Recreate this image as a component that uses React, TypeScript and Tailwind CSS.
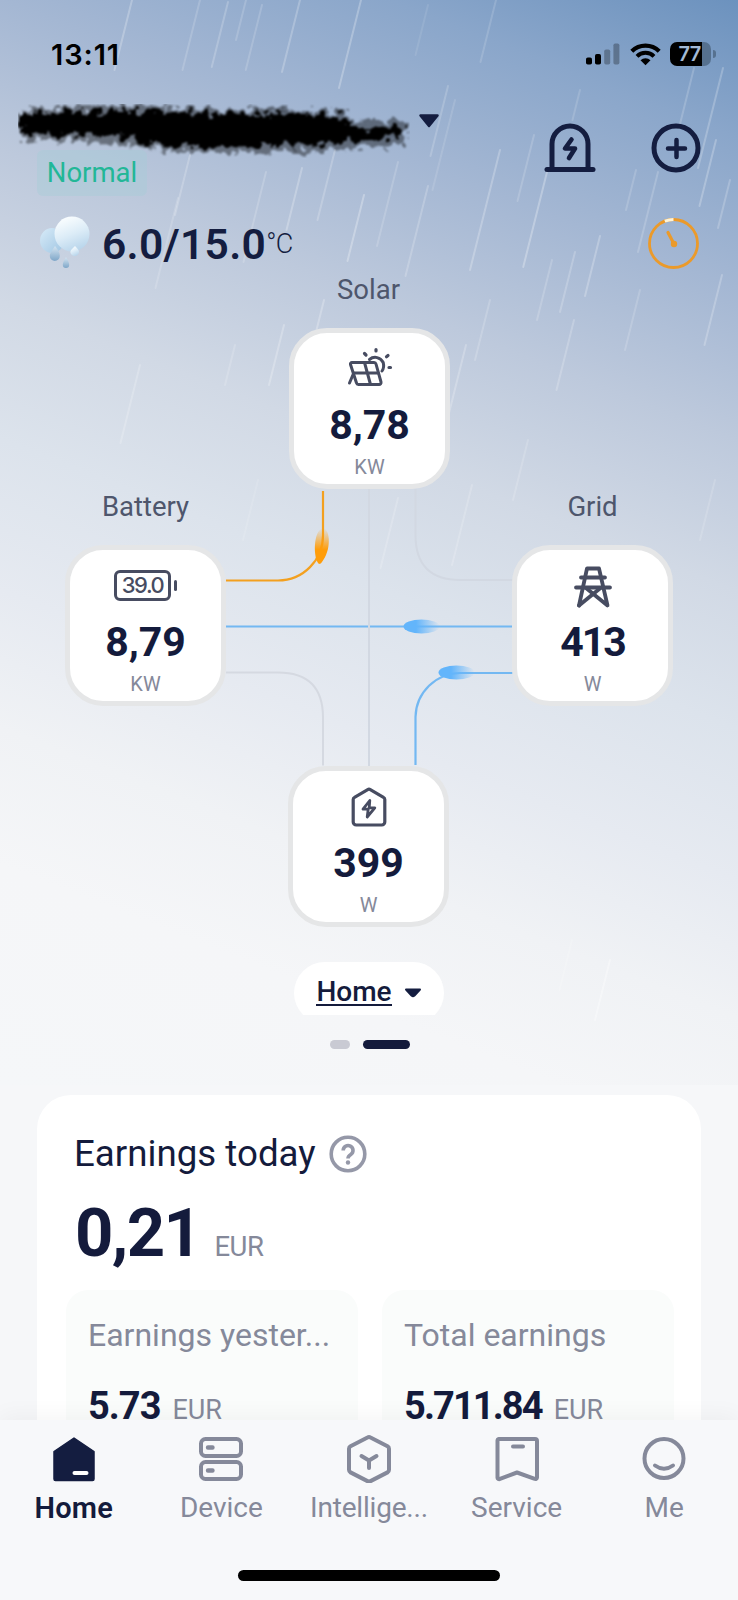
import type { ReactNode } from "react";

const RAIN: [number, number, number, number][] = [
  [132, 0, 70, 0.3], [200, 0, 70, 0.2], [228, 2, 65, 0.25], [246, 0, 40, 0.2], [262, 5, 65, 0.2], [300, 0, 72, 0.28],
  [361, 0, 88, 0.32], [496, 0, 62, 0.18], [428, 5, 50, 0.12], [448, 86, 70, 0.22],
  [190, 155, 60, 0.25], [178, 198, 90, 0.2], [302, 168, 62, 0.3], [335, 150, 70, 0.25], [364, 195, 66, 0.35],
  [398, 162, 84, 0.2], [428, 186, 90, 0.25], [455, 100, 90, 0.15], [500, 150, 120, 0.3], [534, 135, 66, 0.2],
  [547, 172, 95, 0.35], [600, 236, 60, 0.3], [575, 252, 60, 0.25], [580, 90, 30, 0.18], [636, 170, 40, 0.2],
  [658, 172, 80, 0.22], [694, 68, 60, 0.22], [723, 68, 100, 0.28], [716, 140, 66, 0.3], [730, 180, 48, 0.25],
  [722, 275, 70, 0.28], [266, 172, 90, 0.22], [324, 300, 50, 0.3], [284, 325, 60, 0.3],
  [466, 345, 70, 0.28], [490, 300, 60, 0.22], [552, 260, 60, 0.22], [574, 320, 70, 0.25],
  [640, 290, 60, 0.2], [140, 365, 78, 0.25], [235, 345, 40, 0.2],
  [398, 498, 70, 0.22], [472, 485, 80, 0.22], [528, 440, 60, 0.2], [715, 480, 60, 0.18], [258, 480, 60, 0.15],
  [610, 960, 60, 0.4], [572, 940, 50, 0.2],
];

function Rain() {
  return (
    <svg className="absolute inset-0" width="738" height="1085" viewBox="0 0 738 1085" fill="none">
      {RAIN.map(([x, y, len, o], i) => (
        <line key={i} x1={x} y1={y} x2={x - len * 0.25} y2={y + len} stroke="#fff" strokeOpacity={o * 0.8} strokeWidth="2" strokeLinecap="round" />
      ))}
    </svg>
  );
}

function StatusBar() {
  return (
    <div className="flex h-[104px] items-center justify-between pt-1 pr-[22px] pl-[51px]">
      <span className="font-[Inter,sans-serif] text-[29px] leading-none font-semibold tracking-[0.9px] text-black">13:11</span>
      <div className="flex items-center">
        <svg width="34" height="22" viewBox="0 0 34 22">
          <rect x="0" y="14.5" width="6" height="7" rx="1.8" />
          <rect x="9" y="11" width="6" height="10.500" rx="1.8" />
          <rect x="18.200" y="6.500" width="6" height="15" rx="1.8" fillOpacity="0.28" />
          <rect x="27.400" y="0.500" width="6" height="21" rx="1.8" fillOpacity="0.28" />
        </svg>
        <svg className="ml-2.5" width="31" height="24" viewBox="0 0 31 24" fill="none" stroke="#000" strokeWidth="4.200">
          <path d="M1.800 9.200a19.500 19.500 0 0 1 27.400 0" />
          <path d="M7 14.400a12 12 0 0 1 17 0" strokeWidth="4" />
          <path d="M10.500 18.300a7.200 7.200 0 0 1 10 0l-5 5z" fill="#000" stroke="none" />
        </svg>
        <div className="ml-[9px] flex h-6 w-[41px] items-center justify-center rounded-[7px] bg-[linear-gradient(90deg,#000_78%,#56718f_78%)]">
          <span className="-ml-0.5 font-[Inter,sans-serif] text-[20px] leading-none font-semibold tracking-[-0.8px] text-[#a3bad6]">77</span>
        </div>
        <div className="ml-0.5 h-2 w-[3px] rounded-r-full bg-[#56718f]" />
      </div>
    </div>
  );
}

function RedactedAccount() {
  return (
    <svg width="392" height="54" viewBox="0 0 392 54" fill="none" className="block">
      <defs>
        <filter id="rough" x="-5%" y="-30%" width="110%" height="160%">
          <feTurbulence type="fractalNoise" baseFrequency="0.11" numOctaves="3" seed="7" result="n" />
          <feDisplacementMap in="SourceGraphic" in2="n" scale="20" xChannelSelector="R" yChannelSelector="G" />
          <feGaussianBlur stdDeviation="1.3" />
        </filter>
      </defs>
      <g filter="url(#rough)">
        <path d="M2 7 40 4 100 2 200 5 300 6 326 8 334 17 372 15 389 18 388 40 350 43 310 47 270 48 200 49 150 47 120 41 60 37 6 35Z" fill="#000" fillOpacity="0.42" />
        <path d="M2 10 60 8 120 7 200 9 300 10 326 12 334 22 386 23 384 34 330 38 300 41 240 42 190 43 140 41 110 34 50 31 4 30Z" fill="#000" />
      </g>
    </svg>
  );
}

function AlarmIcon() {
  return (
    <svg width="52" height="50" viewBox="0 0 52 50" fill="none" stroke="#141d40" strokeWidth="5" strokeLinecap="round" strokeLinejoin="round">
      <path d="M8 45V21a18 18 0 0 1 36 0v24" />
      <path d="M3 46.500h46" />
      <path d="M27.500 16.500 21 25.500h10l-6 9.500" strokeWidth="4.600" />
    </svg>
  );
}

function PlusCircle() {
  return (
    <svg width="50" height="50" viewBox="0 0 50 50" fill="none" stroke="#141d40" strokeWidth="5" strokeLinecap="round">
      <circle cx="25" cy="25" r="22" />
      <path d="M25.500 17v17M17 25.500h17" strokeWidth="4.500" />
    </svg>
  );
}

function WeatherIcon() {
  return (
    <svg width="52" height="54" viewBox="0 0 52 54">
      <defs>
        <linearGradient id="cloudFront" x1="0.3" y1="0" x2="0.7" y2="1">
          <stop offset="0" stopColor="#fbfeff" />
          <stop offset="0.5" stopColor="#dcecf7" />
          <stop offset="1" stopColor="#b5d3ea" />
        </linearGradient>
        <linearGradient id="cloudBack" x1="0" y1="0" x2="1" y2="1">
          <stop offset="0" stopColor="#d8ebf8" />
          <stop offset="1" stopColor="#9fc5e2" />
        </linearGradient>
        <linearGradient id="drop" x1="0" y1="0" x2="0" y2="1">
          <stop offset="0" stopColor="#d5e5f1" />
          <stop offset="1" stopColor="#7ea6c8" />
        </linearGradient>
      </defs>
      <ellipse cx="13" cy="24.500" rx="12" ry="12.500" fill="url(#cloudBack)" />
      <circle cx="33" cy="18" r="17.500" fill="url(#cloudFront)" />
      <path d="M16 30c4 5 4.800 7.500 4.800 10a5 5 0 0 1-10 0c0-2.500 2-5 5.200-10Z" fill="url(#drop)" />
      <path d="M36 30c3 3 4 4.500 4 6a4.300 4 0 0 1-8.600 0c0-1.500 1.600-3 4.600-6Z" fill="url(#cloudFront)" />
      <path d="M27 41c2.300 4 3.200 6 3.200 7.800a3.200 3.200 0 0 1-6.400 0c0-1.800.9-3.800 3.200-7.800Z" fill="url(#drop)" />
    </svg>
  );
}

function GaugeIcon() {
  return (
    <svg width="52" height="52" viewBox="0 0 52 52" fill="none" strokeLinecap="round">
      <circle cx="25.500" cy="26.500" r="24" stroke="#eb9a2a" strokeWidth="2.800" />
      <path d="M16.800 4.200a24 24 0 0 1 8.700-1.700" stroke="#fdf3d8" strokeWidth="3" strokeLinecap="butt" />
      <path d="M20 15.500 25.500 26" stroke="#eb9a2a" strokeWidth="3.200" />
      <circle cx="26" cy="27" r="3.200" fill="#eb9a2a" />
    </svg>
  );
}

function SolarIcon() {
  return (
    <svg width="46" height="42" viewBox="0 0 46 42" fill="none" stroke="#474c61" strokeWidth="3" strokeLinecap="round" strokeLinejoin="round">
      <path d="M5 15.500h22a2 2 0 0 1 2 1.500l5 18a2 2 0 0 1-2 2.500H11.500a2 2 0 0 1-2-1.500L3.500 17.500A1.500 1.500 0 0 1 5 15.500Z" />
      <path d="M7 26h24M17.500 15.500l6 22M6.500 26.500 2.500 36" />
      <path d="M22.500 12.500A8.800 8.800 0 0 1 36.200 15.500Q37.500 20.500 35 24" />
      <path d="M29 2.500v1.500M17.500 6.500l1.500 1.500M41 8.500 39.500 9.700M42 20.500h1.500" strokeWidth="3.200" />
    </svg>
  );
}

function BatteryIcon() {
  return (
    <div className="flex items-center">
      <div className="flex h-[31px] w-[57px] items-center justify-center rounded-[6px] border-[3px] border-[#474c61] font-[Inter,sans-serif] text-[22px] leading-none font-medium tracking-[-1.4px] text-[#474c61]">
        39.0
      </div>
      <div className="ml-[3px] h-[11px] w-[3px] rounded-full bg-[#474c61]" />
    </div>
  );
}

function PylonIcon() {
  return (
    <svg width="40" height="42" viewBox="0 0 40 42" fill="none" stroke="#474c61" strokeWidth="3.800" strokeLinecap="round" strokeLinejoin="round" className="translate-y-0.5">
      <path d="M6 39.500 14 2.500h12l8.500 37L13 22" />
      <path d="M6 39.500 27.500 22" />
      <path d="M8 11.500h24M3 21.500h34" />
    </svg>
  );
}

function HouseIcon() {
  return (
    <svg width="36" height="40" viewBox="0 0 36 40" fill="none" stroke="#474c61" strokeWidth="3.200" strokeLinejoin="round" className="translate-y-px">
      <path d="M2.200 12.500a2.500 2.500 0 0 1 1.300-2.200L16.700 2.600a2.500 2.500 0 0 1 2.600 0l13.200 7.700a2.500 2.500 0 0 1 1.300 2.200V35a3 3 0 0 1-3 3H5.200a3 3 0 0 1-3-3Z" />
      <path d="M18.800 13.500 12 22.200h5.200l-1 7.800 7.600-9.200h-5.600Z" strokeWidth="2.800" />
    </svg>
  );
}

function Node({ place, icon, value, unit, tracking }: { place: string; icon: ReactNode; value: string; unit: string; tracking: string }) {
  return (
    <div className={`absolute flex h-[161px] w-[161px] flex-col items-center rounded-[38px] border-[5.5px] border-[#e5e6e7] bg-white ${place}`}>
      <div className="mt-3.5 flex h-[42px] items-center justify-center">{icon}</div>
      <div className={`mt-[14px] font-[Roboto,sans-serif] text-[41px] leading-[44px] font-bold text-[#141b3c] ${tracking}`}>{value}</div>
      <div className="mt-2 font-[Roboto,sans-serif] text-[20px] leading-6 text-[#85899a]">{unit}</div>
    </div>
  );
}

function NodeLabel({ place, children }: { place: string; children: ReactNode }) {
  return <div className={`absolute w-[161px] text-center font-[Roboto,sans-serif] text-[27.5px] leading-8 text-[#4e566c] ${place}`}>{children}</div>;
}

function EnergyFlow() {
  return (
    <div className="relative h-[684px]">
      <svg className="absolute inset-0" width="738" height="684" viewBox="0 278 738 684" fill="none" strokeWidth="2">
        <defs>
          <linearGradient id="orangeBlob" x1="0" y1="0" x2="0" y2="1">
            <stop offset="0" stopColor="#ff9d0a" stopOpacity="0" />
            <stop offset="0.6" stopColor="#ff9d0a" />
          </linearGradient>
          <linearGradient id="blueBlob" x1="1" y1="0" x2="0" y2="0">
            <stop offset="0" stopColor="#63b5fb" stopOpacity="0" />
            <stop offset="0.65" stopColor="#63b5fb" />
          </linearGradient>
        </defs>
        <path d="M415.500 489v46q0 45 45 45h52" stroke="#d2d8e2" />
        <path d="M226 672.500h52q45 0 45 45v48" stroke="#d5d9e1" />
        <path d="M323 491v44a45 45 0 0 1-45 45.500h-52" stroke="#f3a01f" strokeWidth="2.200" />
        <path d="M226 626.500h286M415.500 765v-48a45 45 0 0 1 45-44h52" stroke="#73b8f2" strokeWidth="2.200" />
        <path d="M369 489v277" stroke="#d2d8e2" />
        <path d="M319 564c-6-5-6-34 4-36 8 2 8 23-1 34q-1 2-3 2Z" fill="url(#orangeBlob)" />
        <ellipse cx="421.500" cy="626.500" rx="18" ry="7" fill="url(#blueBlob)" />
        <ellipse cx="456.500" cy="672.500" rx="18" ry="7" fill="url(#blueBlob)" />
      </svg>
      <NodeLabel place="left-[288px] top-[-4px]">Solar</NodeLabel>
      <NodeLabel place="left-[65px] top-[213px]">Battery</NodeLabel>
      <NodeLabel place="left-[512px] top-[213px]">Grid</NodeLabel>
      <Node place="left-[289px] top-[50px]" icon={<SolarIcon />} value="8,78" unit="KW" tracking="tracking-[0px]" />
      <Node place="left-[65px] top-[267px]" icon={<BatteryIcon />} value="8,79" unit="KW" tracking="tracking-[0px]" />
      <Node place="left-[512px] top-[267px]" icon={<PylonIcon />} value="413" unit="W" tracking="tracking-[-2px]" />
      <Node place="left-[288px] top-[488px]" icon={<HouseIcon />} value="399" unit="W" tracking="tracking-[0px]" />
    </div>
  );
}

function EarningsTile({ label, value, tracking }: { label: string; value: string; tracking: string }) {
  return (
    <div className="h-[180px] w-[292px] rounded-[22px] bg-[#fafcfb] px-[22px] pt-[26px] font-[Roboto,sans-serif]">
      <div className="text-[32px] leading-[38px] whitespace-nowrap text-[#85899a]">{label}</div>
      <div className="mt-[29px] flex items-baseline gap-3">
        <span className={`text-[38px] leading-[46px] font-bold text-[#141b3c] ${tracking}`}>{value}</span>
        <span className="text-[27px] text-[#85899a]">EUR</span>
      </div>
    </div>
  );
}

const NAV: { label: string; icon: ReactNode }[] = [
  {
    label: "Home",
    icon: (
      <>
        <path d="M24 3 4 16.500V44a1.500 1.500 0 0 0 1.500 1.500h37A1.500 1.500 0 0 0 44 44V16.500Z" fill="#141d40" stroke="#141d40" strokeWidth="1.500" strokeLinejoin="round" />
        <path d="M24.500 38h12" stroke="#fff" strokeWidth="4" strokeLinecap="round" />
      </>
    ),
  },
  {
    label: "Device",
    icon: (
      <>
        <rect x="4" y="4" width="40" height="17" rx="4.500" />
        <rect x="4" y="27" width="40" height="17" rx="4.500" />
        <path d="M11 12.500h4.500M11 35.500h4.500" strokeWidth="4.400" />
      </>
    ),
  },
  {
    label: "Intellige...",
    icon: (
      <>
        <path d="M22.500 2.500a3 3 0 0 1 3 0l17 8.700a3 3 0 0 1 1.500 2.600v21a3 3 0 0 1-1.500 2.600l-17 8.700a3 3 0 0 1-3 0l-17-8.700A3 3 0 0 1 4 34.800v-21a3 3 0 0 1 1.500-2.600Z" />
        <path d="m16.500 21 7.500 4.500 7.500-4.500M24 25.500V33" />
      </>
    ),
  },
  {
    label: "Service",
    icon: (
      <>
        <path d="M6 4h36a2 2 0 0 1 2 2v36.500a1.500 1.500 0 0 1-2.200 1.300L24 37.500 7 43.800a1.500 1.500 0 0 1-2.500-1.300V6A2 2 0 0 1 6 4Z" />
        <path d="M20 11.500h10" />
      </>
    ),
  },
  {
    label: "Me",
    icon: (
      <>
        <circle cx="24" cy="23.500" r="19.500" />
        <path d="M15 30.500q9 6.500 18 0" />
      </>
    ),
  },
];

function BottomNav() {
  return (
    <nav className="relative h-[180px] shrink-0 bg-[#f7f8fa] shadow-[0_-4px_22px_rgba(0,0,0,0.045)]">
      <div className="grid grid-cols-5 pt-[15px]">
        {NAV.map(({ label, icon }, i) => (
          <div key={label} className="flex flex-col items-center">
            <svg width="48" height="48" viewBox="0 0 48 48" fill="none" stroke="#85899a" strokeWidth="4" strokeLinecap="round" strokeLinejoin="round">
              {icon}
            </svg>
            <span className={`mt-[9px] font-[Roboto,sans-serif] leading-8 ${i === 0 ? "text-[29px] font-semibold tracking-[0.2px] text-[#141b3c]" : i === 2 ? "text-[28px] tracking-[-0.2px] text-[#85899a]" : "text-[28px] text-[#85899a]"}`}>{label}</span>
          </div>
        ))}
      </div>
      <div className="mx-auto mt-[46px] h-[11px] w-[262px] rounded-full bg-black" />
    </nav>
  );
}

export default function App() {
  return (
    <div className="relative flex h-[1600px] w-[738px] flex-col overflow-hidden bg-[#f6f7f9]">
      <div className="absolute inset-x-0 top-0 h-[1085px] bg-[linear-gradient(201.5deg,#6c92be_0%,#8aa6ca_10%,#a4b7d3_21%,#bdc9dc_32%,#d1d9e5_43%,#dce3ec_53%,#e6eaf1_64%,#f0f2f5_74%,#f5f6f8_84%,#f5f7f9_100%)]">
        <Rain />
      </div>
      <div className="relative min-h-0 flex-1 overflow-hidden">
        <StatusBar />
        <header className="flex h-[104px] justify-between pr-[37px]">
          <div className="pl-[18px]">
            <div className="flex h-[46px] items-start">
              <RedactedAccount />
              <svg className="mt-2.5 ml-2" width="22" height="14" viewBox="0 0 22 14">
                <path d="M2.500 1.500h17L11 12Z" fill="#141d40" stroke="#141d40" strokeWidth="2.500" strokeLinejoin="round" />
              </svg>
            </div>
            <div className="ml-[19px] flex h-[46px] w-[110px] items-center justify-center rounded-md bg-[#a5ced6]/40 font-[Roboto,sans-serif] text-[27.5px] leading-none text-[#22b797]">
              <span>Normal</span>
            </div>
          </div>
          <div className="flex h-[88px] items-center gap-[55px]">
            <AlarmIcon />
            <PlusCircle />
          </div>
        </header>
        <div className="flex h-[70px] items-center pr-[38px] pl-[39px]">
          <WeatherIcon />
          <div className="ml-[11px] flex items-start text-[#141d40]">
            <span className="pt-1 font-[Roboto,sans-serif] text-[42.5px] leading-[50px] font-semibold tracking-[0.3px]">6.0/15.0</span>
            <span className="pt-[10px] font-[Roboto,sans-serif] text-[27px] leading-[36px] font-light tracking-[-0.5px]">°C</span>
          </div>
          <div className="ml-auto">
            <GaugeIcon />
          </div>
        </div>
        <EnergyFlow />
        <div className="mx-auto h-[53px] w-[150px] overflow-hidden">
          <div className="flex h-[62px] items-center justify-center gap-3 rounded-[31px] bg-white">
            <span className="border-b-2 border-[#141b3c] font-[Roboto,sans-serif] text-[28px] leading-[24px] font-medium text-[#141b3c]">Home</span>
            <svg width="18" height="10" viewBox="0 0 18 10">
              <path d="M2 1.500h14L10.500 7.500q-1.500 1.200-3 0Z" fill="#141d40" stroke="#141d40" strokeWidth="2" strokeLinejoin="round" />
            </svg>
          </div>
        </div>
        <div className="mt-[25px] ml-[330px] flex gap-[13px]">
          <div className="h-[9px] w-5 rounded-full bg-[#c9cad3]" />
          <div className="h-[9px] w-[47px] rounded-full bg-[#141b3c]" />
        </div>
        <section className="mx-[37px] mt-[46px] h-[400px] rounded-t-[34px] bg-white pt-[38px] font-[Roboto,sans-serif]">
          <div className="flex items-center gap-3.5 pl-[37px]">
            <h2 className="text-[36.7px] leading-[42px] text-[#141b3c]">Earnings today</h2>
            <svg width="38" height="38" viewBox="0 0 38 38" fill="none" stroke="#9598a8" strokeWidth="3.600" strokeLinecap="round" className="-ml-px">
              <circle cx="19" cy="19" r="16.800" />
              <path d="M14.200 15.500a4.900 4.900 0 1 1 7.600 4c-2 1.300-2.800 1.900-2.800 4" strokeLinecap="butt" />
              <circle cx="19" cy="27.500" r="2.200" fill="#9598a8" stroke="none" />
            </svg>
          </div>
          <div className="mt-[19px] flex items-baseline gap-3.5 pl-[38px]">
            <span className="text-[67px] leading-[78px] font-bold tracking-[-1.6px] text-[#141b3c]">0,21</span>
            <span className="text-[27.5px] tracking-[-0.5px] text-[#85899a]">EUR</span>
          </div>
          <div className="mt-[18px] flex gap-6 pl-[29px]">
            <EarningsTile label="Earnings yester..." value="5.73" tracking="tracking-[-1px]" />
            <EarningsTile label="Total earnings" value="5.711.84" tracking="tracking-[-1.9px]" />
          </div>
        </section>
      </div>
      <BottomNav />
    </div>
  );
}
